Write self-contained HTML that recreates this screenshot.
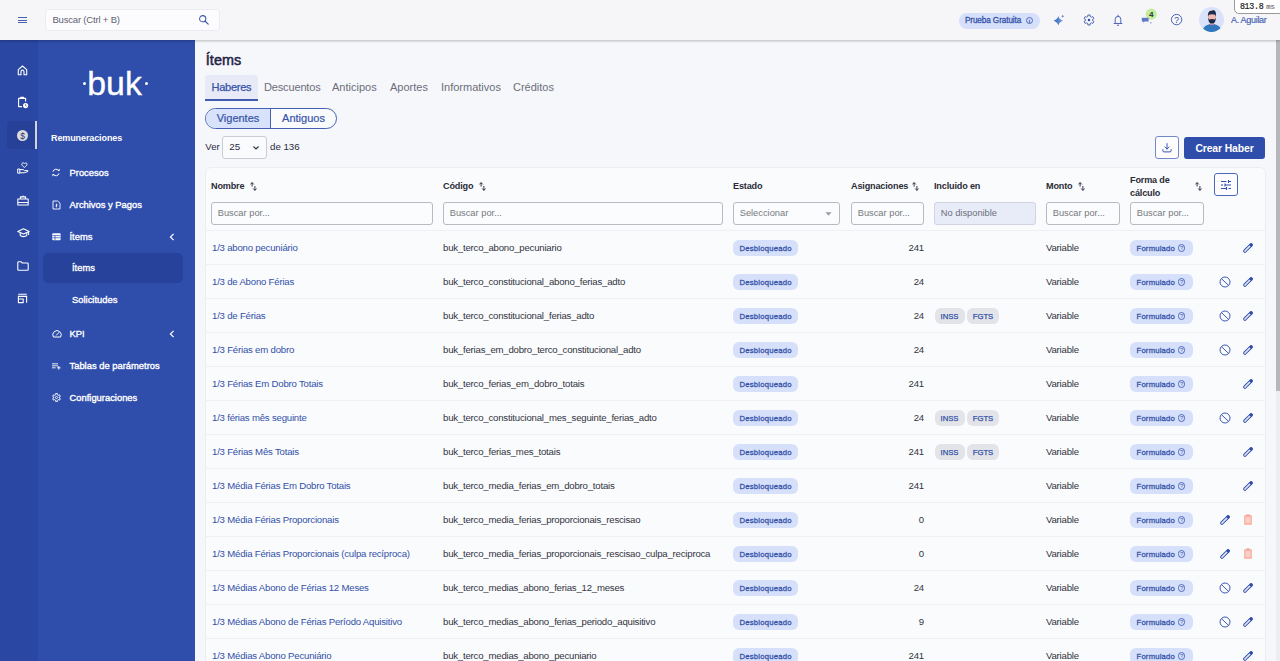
<!DOCTYPE html>
<html lang="es">
<head>
<meta charset="utf-8">
<title>Ítems</title>
<style>
*{box-sizing:border-box;margin:0;padding:0}
html,body{width:1280px;height:661px;overflow:hidden}
body{position:relative;background:#f6f7fa;font-family:"Liberation Sans",sans-serif;color:#2b2d42;font-size:11px}
a{text-decoration:none;color:inherit}
.abs{position:absolute}
/* top bar */
.topbar{position:absolute;left:0;top:0;width:1280px;height:40px;background:#f6f6f9;box-shadow:0 1px 2.5px rgba(0,0,0,.25);z-index:5}
.burger{position:absolute;left:18px;top:17px;width:9.2px}
.burger i{display:block;height:1px;background:#4660b4;margin-bottom:1.5px}
.search{position:absolute;left:45.4px;top:9.2px;width:174.4px;height:21.4px;background:#fcfcfe;border:1px solid #ebecf2;border-radius:3px}
.search span{position:absolute;left:6px;top:4px;font-size:9.5px;letter-spacing:-0.18px;color:#5f6270;white-space:nowrap}
.trial{position:absolute;left:958.6px;top:13.3px;width:81px;height:15.6px;border-radius:8px;background:#d6e0fa;color:#3552a8;font-size:8.2px;letter-spacing:-0.1px;-webkit-text-stroke:0.3px #3552a8;line-height:15.8px;padding-left:6.3px;white-space:nowrap}
.q.qi{margin-left:4.5px;-webkit-text-stroke:0;font-weight:bold;width:7.5px;height:7.5px;line-height:6.4px}
.user{position:absolute;left:1231px;top:14.8px;font-size:9px;letter-spacing:-0.3px;color:#3f5bb0;white-space:nowrap;-webkit-text-stroke:0.15px #3f5bb0}
.avatar{position:absolute;left:1199.2px;top:7.2px;width:25.2px;height:25.2px;border-radius:50%;background:#d9e2f9;overflow:hidden}
.prof{position:absolute;left:1234.3px;top:-1px;width:47px;height:15px;background:#fff;border:1px solid #999;border-radius:0 0 0 5px;font-family:"Liberation Mono",monospace;font-size:8.3px;line-height:13.6px;color:#222;padding-left:4.6px;letter-spacing:-0.25px;white-space:nowrap;z-index:9;-webkit-text-stroke:0.2px #222}
.prof small{font-size:7.4px;color:#666;margin-left:2.6px;-webkit-text-stroke:0.1px #666;letter-spacing:-0.2px}
/* sidebar */
.rail{position:absolute;left:0;top:40px;width:37.5px;height:621px;background:#2a47a3}
.side{position:absolute;left:37.5px;top:40px;width:157.5px;height:621px;background:#2f4dab}
.railact{position:absolute;left:7px;top:121px;width:28px;height:27.6px;border-radius:4px 0 0 4px;background:#274198}
.railbar{position:absolute;left:35px;top:121px;width:2.2px;height:28px;background:#d3d5de}
.ri{position:absolute;left:16px}
.logo{position:absolute;left:87.3px;top:66.9px;color:#fff;font-size:33.8px;line-height:33.8px;letter-spacing:0;white-space:nowrap;-webkit-text-stroke:0.35px #fff}
.ldot{position:absolute;top:81.5px;width:3.5px;height:3.5px;border-radius:50%;background:#fff}
.sect{position:absolute;left:51px;top:133px;color:#fff;font-weight:bold;font-size:9px;letter-spacing:-0.1px;white-space:nowrap}
.mi{position:absolute;left:69.5px;color:#fff;font-size:9.4px;white-space:nowrap;-webkit-text-stroke:0.35px #fff}
.mi.sub{left:72px}
.subact{position:absolute;left:43px;top:253px;width:140px;height:30px;border-radius:5px;background:#27429a}
.mico{position:absolute;left:52px}
.chev{position:absolute;left:168px}
/* main */
h1{position:absolute;left:205.8px;top:51.5px;font-size:14.4px;line-height:16px;font-weight:normal;-webkit-text-stroke:0.5px #1f2346;color:#1f2346;white-space:nowrap;letter-spacing:0.05px}
.tabact{position:absolute;left:205px;top:75.2px;width:52.7px;height:25.6px;background:#e8ebf7;border-bottom:2px solid #3f5aae;border-radius:3px 3px 0 0}
.tab{position:absolute;top:81px;font-size:11px;color:#6b6e7a;white-space:nowrap}
.tab.on{color:#3553a9;letter-spacing:-0.25px;-webkit-text-stroke:0.25px #3553a9;left:211.5px !important}
.pill{position:absolute;left:205px;top:108px;width:132px;height:21px;border:1px solid #4560b2;border-radius:11px;overflow:hidden;background:#fafbfd}
.pill b{position:absolute;top:0;height:19px;line-height:19px;text-align:center;font-weight:normal;font-size:11px;color:#3552a8;-webkit-text-stroke:0.2px #3552a8}
.pill .p1{left:0;width:65px;background:#d8e2fa;border-right:1px solid #4560b2}
.pill .p2{left:65px;width:65px}
.ver{position:absolute;left:205.3px;top:140.6px;font-size:9.6px;line-height:11px;color:#2b2d42}
.versel{position:absolute;left:222px;top:136px;width:45.4px;height:22.8px;border:1px solid #cbccd3;border-radius:3px;background:#fafbfd;font-size:9.8px;line-height:20.6px;padding-left:6.3px}
.de{position:absolute;left:270px;top:140.6px;font-size:9.7px;line-height:11px;color:#2b2d42;white-space:nowrap}
.dl{position:absolute;left:1154.5px;top:136px;width:24.5px;height:23px;border:1px solid #7388cb;border-radius:3px;background:#fdfdff}
.crear{position:absolute;left:1184px;top:136.7px;width:81px;height:22px;border-radius:3px;background:#2f4daa;color:#fff;font-weight:bold;font-size:10.4px;letter-spacing:-0.12px;text-align:center;line-height:24px;white-space:nowrap}
.card{position:absolute;left:205px;top:167px;width:1061px;height:520px;background:#fafbfd;border:1px solid #ecedf2;border-radius:6px}
.th{position:absolute;font-size:9.1px;font-weight:bold;color:#2a2b36;white-space:nowrap;line-height:12.4px;letter-spacing:-0.16px}
.sort{position:absolute;top:182px}
.inp{position:absolute;top:202.4px;height:22.4px;border:1px solid #b9bac1;border-radius:3px;background:#fbfcfd;font-size:9.3px;color:#787982;line-height:20.4px;padding-left:5.7px;white-space:nowrap;overflow:hidden}
.inp.dis{background:#e8ecf8;border-color:#cfd3e2;color:#6b6e7a}
.hline{position:absolute;left:206px;width:1059px;height:1px;background:#eef0f4}
.cfg{position:absolute;left:1214px;top:173.3px;width:23.7px;height:22.5px;border:1px solid #4d67b8;border-radius:3px;background:#fdfdff}
/* rows */
.rows{position:absolute;left:205px;top:0;width:1061px}
.row{position:absolute;left:0;width:1061px;height:34px;border-bottom:1px solid #eef0f4;line-height:34.4px;font-size:9.6px;letter-spacing:-0.2px;white-space:nowrap}
.row>*{position:absolute;top:0}
.nm{left:7px;color:#3350a8}
.cd{left:238px;color:#33343e}
.bd{height:16px;line-height:17px;top:9px !important;letter-spacing:0;border-radius:6px;background:#d6e0fa;color:#3552a8;font-size:7.7px;-webkit-text-stroke:0.28px #3552a8;padding:0 6.5px}
.st{left:528px;width:65px;letter-spacing:0.22px}
.fm{left:925px;width:63px;letter-spacing:0.2px}
.asg{left:640px;width:79px;text-align:right;color:#33343e}
.bg{height:16px;line-height:17px;top:9px !important;border-radius:6px;background:#e3e4e9;color:#3552a8;font-size:7.7px;letter-spacing:0;-webkit-text-stroke:0.25px #3552a8;text-align:center}
.g1{left:729.5px;width:30px}
.g2{left:762px;width:32px}
.mt{left:841px;color:#33343e}
.q{display:inline-block;width:7.6px;height:7.6px;border:0.75px solid #4f69b9;border-radius:50%;font-style:normal;font-size:6px;line-height:6.3px;text-align:center;font-weight:normal;vertical-align:0.7px;margin-left:0.5px;-webkit-text-stroke:0;letter-spacing:0;color:#3f59b0}
.ic{position:absolute}
/* scrollbar */
.sbtrack{position:absolute;left:1276px;top:40px;width:4px;height:621px;background:#eeeef2}
.sbthumb{position:absolute;left:1276px;top:40px;width:4px;height:351px;background:#b6b7ba}
</style>
</head>
<body>
<div class="topbar">
  <div class="burger"><i></i><i></i><i></i></div>
  <div class="search"><span>Buscar (Ctrl + B)</span>
    <svg class="abs" style="left:152px;top:4px" width="12" height="12" viewBox="0 0 12 12"><circle cx="4.7" cy="4.7" r="3.1" fill="none" stroke="#3a56ad" stroke-width="1.05"/><path d="M7 7 L10.2 10.2" stroke="#3a56ad" stroke-width="1.15" stroke-linecap="round"/></svg>
  </div>
  <div class="trial">Prueba Gratuita<i class="q qi">i</i></div>
  <svg class="abs" style="left:1053px;top:14px" width="13" height="13" viewBox="0 0 13 13"><defs><linearGradient id="sg" x1="0" x2="1" y1="0" y2="0"><stop offset="0" stop-color="#2368c0"/><stop offset="1" stop-color="#8a9ddb"/></linearGradient></defs><path d="M5.3 2.1 Q6.3 5.8 10.2 6.8 Q6.3 7.8 5.3 11.5 Q4.3 7.8 0.5 6.8 Q4.3 5.8 5.3 2.1 Z" fill="url(#sg)"/><path d="M9.7 0.5 Q9.9 2 11.4 2.2 Q9.9 2.4 9.7 3.9 Q9.5 2.4 8 2.2 Q9.5 2 9.7 0.5 Z" fill="#6c84d0"/></svg>
  <svg class="abs" style="left:1082.8px;top:14px" width="12" height="12" viewBox="0 0 12 12"><path d="M4.85 1.03 L7.15 1.03 L7.11 2.37 L8.59 3.22 L9.73 2.52 L10.88 4.51 L9.70 5.15 L9.70 6.85 L10.88 7.49 L9.73 9.48 L8.59 8.78 L7.11 9.63 L7.15 10.97 L4.85 10.97 L4.89 9.63 L3.41 8.78 L2.27 9.48 L1.12 7.49 L2.30 6.85 L2.30 5.15 L1.12 4.51 L2.27 2.52 L3.41 3.22 L4.89 2.37 Z" fill="none" stroke="#4660b4" stroke-width="0.95" stroke-linejoin="round"/><circle cx="6" cy="6" r="1.25" fill="#2f4daa"/></svg>
  <svg class="abs" style="left:1112px;top:14px" width="12" height="13" viewBox="0 0 12 13"><path d="M3.2 9.4 V5.3 A2.8 2.9 0 0 1 8.8 5.3 V9.4 M2.1 9.5 H9.9 M6 1.2 V2.3 M5.3 11.2 H6.7" fill="none" stroke="#4660b4" stroke-width="0.95" stroke-linecap="round"/></svg>
  <svg class="abs" style="left:1140px;top:8px" width="18" height="18" viewBox="0 0 18 18"><circle cx="11.2" cy="6.1" r="5.6" fill="#c3ec9c"/><path d="M1.8 9.8 H8.6 V13.4 H4.6 L3.2 14.8 V13.4 H1.8 Z" fill="#6079c7"/><rect x="10.2" y="14.3" width="1.3" height="1" fill="#6079c7"/></svg>
  <div class="abs" style="left:1146px;top:9.5px;width:10.4px;text-align:center;font-size:8px;line-height:9px;font-weight:bold;color:#2b2d42">4</div>
  <svg class="abs" style="left:1170px;top:13px" width="13" height="13" viewBox="0 0 13 13"><circle cx="6.6" cy="6.6" r="5.2" fill="none" stroke="#3f59b0" stroke-width="0.95"/></svg>
  <div class="abs" style="left:1171px;top:14.6px;width:11.2px;text-align:center;font-size:8.5px;line-height:10px;color:#2f4daa">?</div>
  <div class="avatar">
    <svg width="26" height="26" viewBox="0 0 26 26"><path d="M3.5 26 C3.5 18.6 8.5 17.2 13 17.2 C17.5 17.2 22.5 18.6 22.5 26 Z" fill="#2f78bf"/><path d="M10 17.4 L13 19.6 L16 17.4 L14.6 16.4 H11.4 Z" fill="#5a64b0"/><rect x="11" y="13" width="4" height="4.6" fill="#efb3a4"/><ellipse cx="13" cy="10.4" rx="3.7" ry="4.4" fill="#f4b9ae"/><path d="M9.1 10 C8.4 5 10.6 3.4 13 3.8 C14.8 2.6 17.8 3.6 16.9 10 L16.2 7.8 Q13 6.6 9.8 7.8 Z" fill="#1c2a4c"/><path d="M9.2 10.4 C9.2 15.4 11.2 16.6 13 16.6 C14.8 16.6 16.8 15.4 16.8 10.4 L15.8 12.4 Q13 11.4 10.2 12.4 Z" fill="#1c2a4c"/></svg>
  </div>
  <div class="user">A. Aguilar</div>
</div>
<div class="prof">813.8<small>ms</small></div>

<div class="rail"></div>
<div class="side"></div>
<div class="railact"></div><div class="railbar"></div>

<svg class="abs" style="left:17px;top:65px" width="11" height="11" viewBox="0 0 11 11"><path d="M1.3 9.8 V4.6 L5.5 1 L9.7 4.6 V9.8 H7 V6.6 A1.5 1.5 0 0 0 4 6.6 V9.8 Z" fill="none" stroke="#fff" stroke-width="1.1" stroke-linejoin="round"/></svg>
<svg class="abs" style="left:17px;top:96px" width="12" height="13" viewBox="0 0 12 13"><path d="M5 10.6 H1.6 V2.4 H8.6 V5.6 M3.6 2.4 V1.2 H6.6 V2.4 Z" fill="none" stroke="#fff" stroke-width="1.1" stroke-linejoin="round"/><circle cx="8.6" cy="9.6" r="2.6" fill="#fff"/><path d="M8.6 8.2 V9.7 L9.6 10.3" stroke="#2a47a3" stroke-width="0.7" fill="none"/></svg>
<svg class="abs" style="left:17px;top:130px" width="11" height="11" viewBox="0 0 11 11"><circle cx="5.5" cy="5.5" r="5.5" fill="#dcdcde"/></svg>
<div class="abs" style="left:17px;top:130.5px;width:11px;text-align:center;font-size:8.5px;color:#24346f;line-height:11px">$</div>
<svg class="abs" style="left:17px;top:162px" width="12" height="12" viewBox="0 0 12 12"><path d="M7.4 1.6 C6.6 0.2 4.4 0.9 4.8 2.6 C5.1 4 7.4 5.4 7.4 5.4 C7.4 5.4 9.7 4 10 2.6 C10.4 0.9 8.2 0.2 7.4 1.6 Z" fill="none" stroke="#fff" stroke-width="0.95" stroke-linejoin="round"/><path d="M0.7 7 H2.8 V11.2 H0.7 Z M2.8 7.6 H6.2 L7.4 8.6 H10.9 V9.5 L7.2 10.8 H2.8" fill="none" stroke="#fff" stroke-width="1" stroke-linejoin="round"/></svg>
<svg class="abs" style="left:17px;top:195px" width="12" height="11" viewBox="0 0 12 11"><path d="M0.8 4 H11.2 V10 H0.8 Z M0.8 7.4 H11.2 M3.4 4 V1.8 H8.6 V4 M4.6 2.8 L6 1 L7.4 2.8" fill="none" stroke="#fff" stroke-width="1.05" stroke-linejoin="round"/></svg>
<svg class="abs" style="left:16.5px;top:228px" width="13" height="10" viewBox="0 0 13 10"><path d="M0.8 3.4 L6.5 0.8 L12.2 3.4 L6.5 6 Z M3.2 4.8 V7.4 C4.4 9 8.6 9 9.8 7.4 V4.8 M11.6 3.8 V7" fill="none" stroke="#fff" stroke-width="1.05" stroke-linejoin="round"/></svg>
<svg class="abs" style="left:17px;top:261px" width="12" height="10" viewBox="0 0 12 10"><path d="M0.8 1.6 Q0.8 0.8 1.6 0.8 H4.2 L5.4 2 H10.4 Q11.2 2 11.2 2.8 V8.4 Q11.2 9.2 10.4 9.2 H1.6 Q0.8 9.2 0.8 8.4 Z" fill="none" stroke="#fff" stroke-width="1.1" stroke-linejoin="round"/></svg>
<svg class="abs" style="left:17px;top:293px" width="11" height="11" viewBox="0 0 11 11"><path d="M1.2 1.2 H9.8 M0.8 3.4 H10.2 M1.4 3.4 V9.6 H6.2 V6 H1.4 M9.6 3.4 V9.8" fill="none" stroke="#fff" stroke-width="1.1" stroke-linejoin="round"/></svg>

<div class="ldot" style="left:82.6px"></div><div class="logo">buk</div><div class="ldot" style="left:144.6px"></div>
<div class="sect">Remuneraciones</div>
<div class="subact"></div>
<div class="mi" style="top:167px">Procesos</div>
<div class="mi" style="top:199px">Archivos y Pagos</div>
<div class="mi" style="top:231px">Ítems</div>
<div class="mi sub" style="top:262px">Ítems</div>
<div class="mi sub" style="top:294px">Solicitudes</div>
<div class="mi" style="top:328px">KPI</div>
<div class="mi" style="top:360px">Tablas de parámetros</div>
<div class="mi" style="top:392px">Configuraciones</div>

<svg class="abs" style="left:51px;top:168px" width="10" height="9" viewBox="0 0 10 9"><path d="M2 3.6 A3.1 3.1 0 0 1 7.6 2.6 M8 5.4 A3.1 3.1 0 0 1 2.4 6.4" fill="none" stroke="#fff" stroke-width="1"/><path d="M6.2 2.9 H8.6 V0.6 Z M3.8 6.1 H1.4 V8.4 Z" fill="#fff"/></svg>
<svg class="abs" style="left:52px;top:199.5px" width="9" height="10" viewBox="0 0 9 10"><path d="M1 1 H5.6 L8 3.2 V9 H1 Z" fill="none" stroke="#fff" stroke-width="0.9" stroke-linejoin="round"/><path d="M4.5 3.6 V7.4 M5.4 4.6 H4 Q3.5 5.1 4 5.5 H5 Q5.5 6 5 6.4 H3.6" fill="none" stroke="#fff" stroke-width="0.6"/></svg>
<svg class="abs" style="left:52px;top:232.5px" width="9" height="8" viewBox="0 0 9 8"><rect x="0.2" y="0.3" width="8.4" height="7" rx="1" fill="#fff"/><path d="M0.2 2.6 H8.6 M0.2 4.8 H8.6 M3 2.6 V7.3" stroke="#2f4dab" stroke-width="0.7"/></svg>
<svg class="abs" style="left:169px;top:232.5px" width="6" height="8" viewBox="0 0 6 8"><path d="M4.6 0.8 L1.4 4 L4.6 7.2" fill="none" stroke="#fff" stroke-width="1.2"/></svg>
<svg class="abs" style="left:169px;top:329.5px" width="6" height="8" viewBox="0 0 6 8"><path d="M4.6 0.8 L1.4 4 L4.6 7.2" fill="none" stroke="#fff" stroke-width="1.2"/></svg>
<svg class="abs" style="left:51.5px;top:330px" width="10" height="8" viewBox="0 0 10 8"><path d="M1.4 7 A4.2 4.2 0 1 1 8.6 7 Z" fill="none" stroke="#fff" stroke-width="1" stroke-linejoin="round"/><path d="M4.4 5.2 L6.8 2.6" stroke="#fff" stroke-width="1" stroke-linecap="round"/></svg>
<svg class="abs" style="left:52px;top:362.5px" width="9" height="7" viewBox="0 0 9 7"><path d="M0 0.8 H6 M0 2.8 H6 M0 4.8 H3.6 M5 4.8 H8.6 M6.8 3 V6.6" fill="none" stroke="#fff" stroke-width="0.9"/></svg>
<svg class="abs" style="left:51.6px;top:393.4px" width="9" height="9" viewBox="0 0 9 9"><path d="M3.60 0.60 L5.40 0.60 L5.35 1.73 L6.48 2.38 L7.43 1.77 L8.33 3.33 L7.33 3.85 L7.33 5.15 L8.33 5.67 L7.43 7.23 L6.48 6.62 L5.35 7.27 L5.40 8.40 L3.60 8.40 L3.65 7.27 L2.52 6.62 L1.57 7.23 L0.67 5.67 L1.67 5.15 L1.67 3.85 L0.67 3.33 L1.57 1.77 L2.52 2.38 L3.65 1.73 Z" fill="none" stroke="#fff" stroke-width="0.95" stroke-linejoin="round"/><circle cx="4.5" cy="4.5" r="1.1" fill="none" stroke="#fff" stroke-width="0.8"/></svg>


<h1>Ítems</h1>
<div class="tabact"></div>
<div class="tab on" style="left:211px">Haberes</div>
<div class="tab" style="left:264px;letter-spacing:-0.15px">Descuentos</div>
<div class="tab" style="left:332px">Anticipos</div>
<div class="tab" style="left:390px">Aportes</div>
<div class="tab" style="left:441px">Informativos</div>
<div class="tab" style="left:513px">Créditos</div>

<div class="pill"><b class="p1">Vigentes</b><b class="p2">Antiguos</b></div>
<div class="ver">Ver</div>
<div class="versel">25<svg class="abs" style="left:29px;top:8px" width="8" height="6" viewBox="0 0 8 6"><path d="M1.5 1.5 L4 4 L6.5 1.5" fill="none" stroke="#2b2d42" stroke-width="1.1"/></svg></div>
<div class="de">de 136</div>
<div class="dl"><svg class="abs" style="left:5.6px;top:5.3px" width="12" height="12" viewBox="0 0 12 12"><path d="M6 1.6 V7 M3.9 5 L6 7.1 L8.1 5 M1.9 7.6 V8.8 Q1.9 9.9 3 9.9 H9 Q10.1 9.9 10.1 8.8 V7.6" fill="none" stroke="#3a56ad" stroke-width="1" stroke-linecap="round" stroke-linejoin="round"/></svg></div>
<div class="crear">Crear Haber</div>

<div class="card"></div>
<div class="th" style="left:211px;top:180px">Nombre</div>
<div class="th" style="left:443px;top:180px">Código</div>
<div class="th" style="left:733px;top:180px">Estado</div>
<div class="th" style="left:851px;top:180px">Asignaciones</div>
<div class="th" style="left:934px;top:180px">Incluido en</div>
<div class="th" style="left:1046px;top:180px">Monto</div>
<div class="th" style="left:1130px;top:173.6px;line-height:13.2px">Forma de<br>cálculo</div>
<svg class="sort" style="left:250.3px" width="7" height="9" viewBox="0 0 7 9"><path d="M2.1 4.6 V0.7 M0.4 2.4 L2.1 0.6 L3.8 2.4 M4.9 4 V8.3 M3.2 6.5 L4.9 8.4 L6.6 6.5" fill="none" stroke="#2b2d42" stroke-width="0.95"/></svg><svg class="sort" style="left:478.5px" width="7" height="9" viewBox="0 0 7 9"><path d="M2.1 4.6 V0.7 M0.4 2.4 L2.1 0.6 L3.8 2.4 M4.9 4 V8.3 M3.2 6.5 L4.9 8.4 L6.6 6.5" fill="none" stroke="#2b2d42" stroke-width="0.95"/></svg><svg class="sort" style="left:912.3px" width="7" height="9" viewBox="0 0 7 9"><path d="M2.1 4.6 V0.7 M0.4 2.4 L2.1 0.6 L3.8 2.4 M4.9 4 V8.3 M3.2 6.5 L4.9 8.4 L6.6 6.5" fill="none" stroke="#2b2d42" stroke-width="0.95"/></svg><svg class="sort" style="left:1078.2px" width="7" height="9" viewBox="0 0 7 9"><path d="M2.1 4.6 V0.7 M0.4 2.4 L2.1 0.6 L3.8 2.4 M4.9 4 V8.3 M3.2 6.5 L4.9 8.4 L6.6 6.5" fill="none" stroke="#2b2d42" stroke-width="0.95"/></svg><svg class="sort" style="left:1194.5px" width="7" height="9" viewBox="0 0 7 9"><path d="M2.1 4.6 V0.7 M0.4 2.4 L2.1 0.6 L3.8 2.4 M4.9 4 V8.3 M3.2 6.5 L4.9 8.4 L6.6 6.5" fill="none" stroke="#2b2d42" stroke-width="0.95"/></svg>
<div class="cfg"><svg class="abs" style="left:5px;top:5px" width="12" height="12" viewBox="0 0 12 12"><path d="M1 2.5 H6.5 M8.5 2.5 H11 M8.5 1 V4 M1 6 H3 M5 6 H11 M5 4.5 V7.5 M1 9.5 H6.5 M8.5 9.5 H11 M6.5 8 V11" fill="none" stroke="#2f4daa" stroke-width="1.1"/></svg></div>

<div class="inp" style="left:211px;width:222px">Buscar por...</div>
<div class="inp" style="left:443px;width:280px">Buscar por...</div>
<div class="inp" style="left:733px;width:107px">Seleccionar<svg class="abs" style="left:90.5px;top:9px" width="7" height="4" viewBox="0 0 7 4"><path d="M0.4 0.3 H6.6 L3.5 3.7 Z" fill="#9b9da8"/></svg></div>
<div class="inp" style="left:851px;width:73px">Buscar por...</div>
<div class="inp dis" style="left:934px;width:102px">No disponible</div>
<div class="inp" style="left:1046px;width:74px">Buscar por...</div>
<div class="inp" style="left:1130px;width:74px">Buscar por...</div>

<div class="hline" style="top:230px"></div>
<div class="rows">
<div class="row" style="top:231px"><a class="nm">1/3 abono pecuniário</a><span class="cd">buk_terco_abono_pecuniario</span><span class="bd st">Desbloqueado</span><span class="asg">241</span><span class="mt">Variable</span><span class="bd fm">Formulado <i class="q">?</i></span><svg class="ic" style="left:1037.2px;top:10.9px" width="12" height="12" viewBox="0 0 12 12"><g transform="rotate(-45 6 6)"><rect x="0.4" y="4.75" width="11.2" height="2.5" rx="1.2" fill="#dfe5f7" stroke="#3350ab" stroke-width="1"/><path d="M8.9 4.5 H10.6 Q11.9 4.5 11.9 6 Q11.9 7.5 10.6 7.5 H8.9 Z" fill="#2f4daa"/></g></svg></div>
<div class="row" style="top:265px"><a class="nm">1/3 de Abono Férias</a><span class="cd">buk_terco_constitucional_abono_ferias_adto</span><span class="bd st">Desbloqueado</span><span class="asg">24</span><span class="mt">Variable</span><span class="bd fm">Formulado <i class="q">?</i></span><svg class="ic" style="left:1014.4000000000001px;top:10.7px" width="12" height="12" viewBox="0 0 12 12"><circle cx="6" cy="6" r="5" fill="none" stroke="#3653ad" stroke-width="0.95"/><path d="M2.4 2.6 L9.6 9.4" stroke="#3653ad" stroke-width="0.95"/></svg><svg class="ic" style="left:1037.2px;top:10.9px" width="12" height="12" viewBox="0 0 12 12"><g transform="rotate(-45 6 6)"><rect x="0.4" y="4.75" width="11.2" height="2.5" rx="1.2" fill="#dfe5f7" stroke="#3350ab" stroke-width="1"/><path d="M8.9 4.5 H10.6 Q11.9 4.5 11.9 6 Q11.9 7.5 10.6 7.5 H8.9 Z" fill="#2f4daa"/></g></svg></div>
<div class="row" style="top:299px"><a class="nm">1/3 de Férias</a><span class="cd">buk_terco_constitucional_ferias_adto</span><span class="bd st">Desbloqueado</span><span class="asg">24</span><span class="bg g1">INSS</span><span class="bg g2">FGTS</span><span class="mt">Variable</span><span class="bd fm">Formulado <i class="q">?</i></span><svg class="ic" style="left:1014.4000000000001px;top:10.7px" width="12" height="12" viewBox="0 0 12 12"><circle cx="6" cy="6" r="5" fill="none" stroke="#3653ad" stroke-width="0.95"/><path d="M2.4 2.6 L9.6 9.4" stroke="#3653ad" stroke-width="0.95"/></svg><svg class="ic" style="left:1037.2px;top:10.9px" width="12" height="12" viewBox="0 0 12 12"><g transform="rotate(-45 6 6)"><rect x="0.4" y="4.75" width="11.2" height="2.5" rx="1.2" fill="#dfe5f7" stroke="#3350ab" stroke-width="1"/><path d="M8.9 4.5 H10.6 Q11.9 4.5 11.9 6 Q11.9 7.5 10.6 7.5 H8.9 Z" fill="#2f4daa"/></g></svg></div>
<div class="row" style="top:333px"><a class="nm">1/3 Férias em dobro</a><span class="cd">buk_ferias_em_dobro_terco_constitucional_adto</span><span class="bd st">Desbloqueado</span><span class="asg">24</span><span class="mt">Variable</span><span class="bd fm">Formulado <i class="q">?</i></span><svg class="ic" style="left:1014.4000000000001px;top:10.7px" width="12" height="12" viewBox="0 0 12 12"><circle cx="6" cy="6" r="5" fill="none" stroke="#3653ad" stroke-width="0.95"/><path d="M2.4 2.6 L9.6 9.4" stroke="#3653ad" stroke-width="0.95"/></svg><svg class="ic" style="left:1037.2px;top:10.9px" width="12" height="12" viewBox="0 0 12 12"><g transform="rotate(-45 6 6)"><rect x="0.4" y="4.75" width="11.2" height="2.5" rx="1.2" fill="#dfe5f7" stroke="#3350ab" stroke-width="1"/><path d="M8.9 4.5 H10.6 Q11.9 4.5 11.9 6 Q11.9 7.5 10.6 7.5 H8.9 Z" fill="#2f4daa"/></g></svg></div>
<div class="row" style="top:367px"><a class="nm">1/3 Férias Em Dobro Totais</a><span class="cd">buk_terco_ferias_em_dobro_totais</span><span class="bd st">Desbloqueado</span><span class="asg">241</span><span class="mt">Variable</span><span class="bd fm">Formulado <i class="q">?</i></span><svg class="ic" style="left:1037.2px;top:10.9px" width="12" height="12" viewBox="0 0 12 12"><g transform="rotate(-45 6 6)"><rect x="0.4" y="4.75" width="11.2" height="2.5" rx="1.2" fill="#dfe5f7" stroke="#3350ab" stroke-width="1"/><path d="M8.9 4.5 H10.6 Q11.9 4.5 11.9 6 Q11.9 7.5 10.6 7.5 H8.9 Z" fill="#2f4daa"/></g></svg></div>
<div class="row" style="top:401px"><a class="nm">1/3 férias mês seguinte</a><span class="cd">buk_terco_constitucional_mes_seguinte_ferias_adto</span><span class="bd st">Desbloqueado</span><span class="asg">24</span><span class="bg g1">INSS</span><span class="bg g2">FGTS</span><span class="mt">Variable</span><span class="bd fm">Formulado <i class="q">?</i></span><svg class="ic" style="left:1014.4000000000001px;top:10.7px" width="12" height="12" viewBox="0 0 12 12"><circle cx="6" cy="6" r="5" fill="none" stroke="#3653ad" stroke-width="0.95"/><path d="M2.4 2.6 L9.6 9.4" stroke="#3653ad" stroke-width="0.95"/></svg><svg class="ic" style="left:1037.2px;top:10.9px" width="12" height="12" viewBox="0 0 12 12"><g transform="rotate(-45 6 6)"><rect x="0.4" y="4.75" width="11.2" height="2.5" rx="1.2" fill="#dfe5f7" stroke="#3350ab" stroke-width="1"/><path d="M8.9 4.5 H10.6 Q11.9 4.5 11.9 6 Q11.9 7.5 10.6 7.5 H8.9 Z" fill="#2f4daa"/></g></svg></div>
<div class="row" style="top:435px"><a class="nm">1/3 Férias Mês Totais</a><span class="cd">buk_terco_ferias_mes_totais</span><span class="bd st">Desbloqueado</span><span class="asg">241</span><span class="bg g1">INSS</span><span class="bg g2">FGTS</span><span class="mt">Variable</span><span class="bd fm">Formulado <i class="q">?</i></span><svg class="ic" style="left:1037.2px;top:10.9px" width="12" height="12" viewBox="0 0 12 12"><g transform="rotate(-45 6 6)"><rect x="0.4" y="4.75" width="11.2" height="2.5" rx="1.2" fill="#dfe5f7" stroke="#3350ab" stroke-width="1"/><path d="M8.9 4.5 H10.6 Q11.9 4.5 11.9 6 Q11.9 7.5 10.6 7.5 H8.9 Z" fill="#2f4daa"/></g></svg></div>
<div class="row" style="top:469px"><a class="nm">1/3 Média Férias Em Dobro Totais</a><span class="cd">buk_terco_media_ferias_em_dobro_totais</span><span class="bd st">Desbloqueado</span><span class="asg">241</span><span class="mt">Variable</span><span class="bd fm">Formulado <i class="q">?</i></span><svg class="ic" style="left:1037.2px;top:10.9px" width="12" height="12" viewBox="0 0 12 12"><g transform="rotate(-45 6 6)"><rect x="0.4" y="4.75" width="11.2" height="2.5" rx="1.2" fill="#dfe5f7" stroke="#3350ab" stroke-width="1"/><path d="M8.9 4.5 H10.6 Q11.9 4.5 11.9 6 Q11.9 7.5 10.6 7.5 H8.9 Z" fill="#2f4daa"/></g></svg></div>
<div class="row" style="top:503px"><a class="nm">1/3 Média Férias Proporcionais</a><span class="cd">buk_terco_media_ferias_proporcionais_rescisao</span><span class="bd st">Desbloqueado</span><span class="asg">0</span><span class="mt">Variable</span><span class="bd fm">Formulado <i class="q">?</i></span><svg class="ic" style="left:1014.2px;top:10.9px" width="12" height="12" viewBox="0 0 12 12"><g transform="rotate(-45 6 6)"><rect x="0.4" y="4.75" width="11.2" height="2.5" rx="1.2" fill="#dfe5f7" stroke="#3350ab" stroke-width="1"/><path d="M8.9 4.5 H10.6 Q11.9 4.5 11.9 6 Q11.9 7.5 10.6 7.5 H8.9 Z" fill="#2f4daa"/></g></svg><svg class="ic" style="left:1038px;top:10.8px" width="10" height="12" viewBox="0 0 10 12"><rect x="1" y="0.9" width="8" height="10.2" rx="1.3" fill="#fbb8af"/><rect x="2.6" y="3.2" width="4.8" height="5.6" rx="0.8" fill="#fccfc8"/><rect x="3.2" y="0.6" width="3.6" height="1" rx="0.4" fill="#e58f86"/></svg></div>
<div class="row" style="top:537px"><a class="nm">1/3 Média Férias Proporcionais (culpa recíproca)</a><span class="cd">buk_terco_media_ferias_proporcionais_rescisao_culpa_reciproca</span><span class="bd st">Desbloqueado</span><span class="asg">0</span><span class="mt">Variable</span><span class="bd fm">Formulado <i class="q">?</i></span><svg class="ic" style="left:1014.2px;top:10.9px" width="12" height="12" viewBox="0 0 12 12"><g transform="rotate(-45 6 6)"><rect x="0.4" y="4.75" width="11.2" height="2.5" rx="1.2" fill="#dfe5f7" stroke="#3350ab" stroke-width="1"/><path d="M8.9 4.5 H10.6 Q11.9 4.5 11.9 6 Q11.9 7.5 10.6 7.5 H8.9 Z" fill="#2f4daa"/></g></svg><svg class="ic" style="left:1038px;top:10.8px" width="10" height="12" viewBox="0 0 10 12"><rect x="1" y="0.9" width="8" height="10.2" rx="1.3" fill="#fbb8af"/><rect x="2.6" y="3.2" width="4.8" height="5.6" rx="0.8" fill="#fccfc8"/><rect x="3.2" y="0.6" width="3.6" height="1" rx="0.4" fill="#e58f86"/></svg></div>
<div class="row" style="top:571px"><a class="nm">1/3 Médias Abono de Férias 12 Meses</a><span class="cd">buk_terco_medias_abono_ferias_12_meses</span><span class="bd st">Desbloqueado</span><span class="asg">24</span><span class="mt">Variable</span><span class="bd fm">Formulado <i class="q">?</i></span><svg class="ic" style="left:1014.4000000000001px;top:10.7px" width="12" height="12" viewBox="0 0 12 12"><circle cx="6" cy="6" r="5" fill="none" stroke="#3653ad" stroke-width="0.95"/><path d="M2.4 2.6 L9.6 9.4" stroke="#3653ad" stroke-width="0.95"/></svg><svg class="ic" style="left:1037.2px;top:10.9px" width="12" height="12" viewBox="0 0 12 12"><g transform="rotate(-45 6 6)"><rect x="0.4" y="4.75" width="11.2" height="2.5" rx="1.2" fill="#dfe5f7" stroke="#3350ab" stroke-width="1"/><path d="M8.9 4.5 H10.6 Q11.9 4.5 11.9 6 Q11.9 7.5 10.6 7.5 H8.9 Z" fill="#2f4daa"/></g></svg></div>
<div class="row" style="top:605px"><a class="nm">1/3 Médias Abono de Férias Período Aquisitivo</a><span class="cd">buk_terco_medias_abono_ferias_periodo_aquisitivo</span><span class="bd st">Desbloqueado</span><span class="asg">9</span><span class="mt">Variable</span><span class="bd fm">Formulado <i class="q">?</i></span><svg class="ic" style="left:1014.4000000000001px;top:10.7px" width="12" height="12" viewBox="0 0 12 12"><circle cx="6" cy="6" r="5" fill="none" stroke="#3653ad" stroke-width="0.95"/><path d="M2.4 2.6 L9.6 9.4" stroke="#3653ad" stroke-width="0.95"/></svg><svg class="ic" style="left:1037.2px;top:10.9px" width="12" height="12" viewBox="0 0 12 12"><g transform="rotate(-45 6 6)"><rect x="0.4" y="4.75" width="11.2" height="2.5" rx="1.2" fill="#dfe5f7" stroke="#3350ab" stroke-width="1"/><path d="M8.9 4.5 H10.6 Q11.9 4.5 11.9 6 Q11.9 7.5 10.6 7.5 H8.9 Z" fill="#2f4daa"/></g></svg></div>
<div class="row" style="top:639px"><a class="nm">1/3 Médias Abono Pecuniário</a><span class="cd">buk_terco_medias_abono_pecuniario</span><span class="bd st">Desbloqueado</span><span class="asg">241</span><span class="mt">Variable</span><span class="bd fm">Formulado <i class="q">?</i></span><svg class="ic" style="left:1037.2px;top:10.9px" width="12" height="12" viewBox="0 0 12 12"><g transform="rotate(-45 6 6)"><rect x="0.4" y="4.75" width="11.2" height="2.5" rx="1.2" fill="#dfe5f7" stroke="#3350ab" stroke-width="1"/><path d="M8.9 4.5 H10.6 Q11.9 4.5 11.9 6 Q11.9 7.5 10.6 7.5 H8.9 Z" fill="#2f4daa"/></g></svg></div>
</div>

<div class="sbtrack"></div><div class="sbthumb"></div>
</body>
</html>
